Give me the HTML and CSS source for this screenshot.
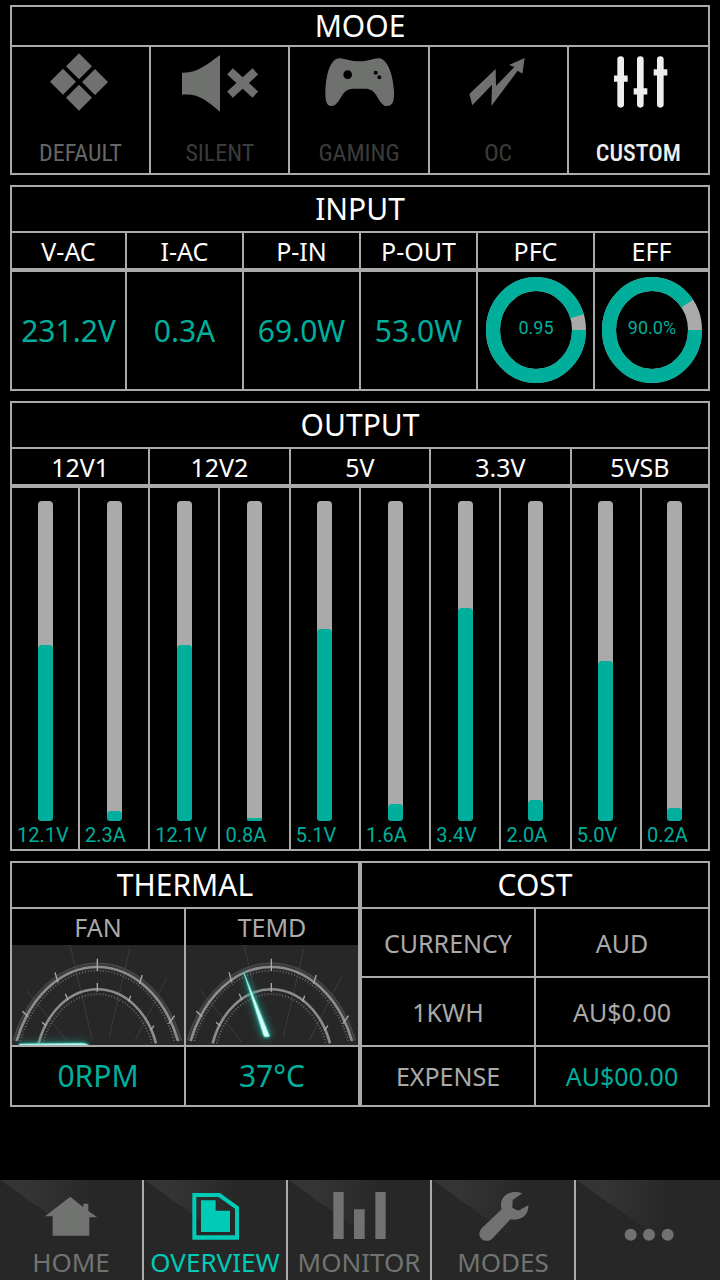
FILE: index.html
```html
<!DOCTYPE html>
<html lang="en">
<head>
    <meta charset="UTF-8">
    <meta name="viewport" content="width=device-width, initial-scale=1.0">
    <title>Overview</title>
    <link rel="stylesheet" href="styles.css">
</head>
<body>
    <main>
        <section class="modes">
            <h2>MOOE</h2>
            <div class="mode-list">
                <button type="button" class="mode mode-default">
                    <svg viewBox="123 153 240 186"><path d="M237 160l39 39-39 39-39-39zM189 206l39 39-39 39-39-39zM285 207l39 39-39 39-39-39zM237 254l39 39-39 39-39-39z"/></svg>
                    <span>DEFAULT</span>
                </button>
                <button type="button" class="mode">
                    <svg viewBox="538 153 240 186"><path d="M544 218C590 220 620 192 658 165V335C620 305 598 280 544 284Z"/><path class="cross" d="M688 214L764 284M764 214L688 284"/></svg>
                    <span>SILENT</span>
                </button>
                <button type="button" class="mode">
                    <svg viewBox="957 153 240 186"><path fill-rule="evenodd" d="M1018 175C1000 174 985 200 979 240C973 285 975 318 993 318C1015 318 1020 290 1035 275Q1045 266 1060 266H1100Q1118 268 1128 284C1140 305 1148 318 1160 318C1180 318 1183 300 1182 275C1180 230 1165 178 1137 175C1120 174 1110 184 1080 184C1050 184 1040 177 1018 175ZM1030 224a13 13 0 1 0 26 0a13 13 0 1 0-26 0ZM1121 218a6 6 0 1 0 12 0a6 6 0 1 0-12 0ZM1132 232a6 6 0 1 0 12 0a6 6 0 1 0-12 0Z"/></svg>
                    <span>GAMING</span>
                </button>
                <button type="button" class="mode">
                    <svg viewBox="295 153 240 186"><path d="M329 282L408 207L409 258L464 201L448 195L495 174L488 221L474 212L395 318L397 254L338 316Z"/></svg>
                    <span>OC</span>
                </button>
                <button type="button" class="mode mode-active">
                    <svg viewBox="714 153 240 186">
                        <path class="rail" d="M782 179V313M841 179V313M901 179V313"/>
                        <path class="knob" d="M762 236H803M821 274H862M881 217H922"/>
                    </svg>
                    <span>CUSTOM</span>
                </button>
            </div>
        </section>

        <table class="input">
            <colgroup><col class="edge"><col span="4"><col class="edge"></colgroup>
            <tr class="title"><th colspan="6">INPUT</th></tr>
            <tr class="names">
                <th>V-AC</th>
                <th>I-AC</th>
                <th>P-IN</th>
                <th>P-OUT</th>
                <th>PFC</th>
                <th>EFF</th>
            </tr>
            <tr class="values">
                <td>231.2V</td>
                <td>0.3A</td>
                <td>69.0W</td>
                <td>53.0W</td>
                <td>
                    <svg class="ring" viewBox="0 0 102 108">
                        <ellipse class="ring-track" cx="52" cy="53" rx="43" ry="46"/>
                        <ellipse class="ring-fill" cx="52" cy="53" rx="43" ry="46" pathLength="100" stroke-dasharray="95 5"/>
                        <text x="52" y="57">0.95</text>
                    </svg>
                </td>
                <td>
                    <svg class="ring" viewBox="0 0 102 108">
                        <ellipse class="ring-track" cx="52" cy="53" rx="43" ry="46"/>
                        <ellipse class="ring-fill" cx="52" cy="53" rx="43" ry="46" pathLength="100" stroke-dasharray="90 10"/>
                        <text x="52" y="57">90.0%</text>
                    </svg>
                </td>
            </tr>
        </table>

        <table class="output">
            <colgroup><col class="edge"><col span="8"><col class="edge"></colgroup>
            <tr class="title"><th colspan="10">OUTPUT</th></tr>
            <tr class="names">
                <th colspan="2">12V1</th>
                <th colspan="2">12V2</th>
                <th colspan="2">5V</th>
                <th colspan="2">3.3V</th>
                <th colspan="2">5VSB</th>
            </tr>
            <tr class="bars">
                <td><div class="bar"><div class="bar-fill" style="height: 55%"></div></div><span>12.1V</span></td>
                <td><div class="bar"><div class="bar-fill" style="height: 3%"></div></div><span>2.3A</span></td>
                <td><div class="bar"><div class="bar-fill" style="height: 55%"></div></div><span>12.1V</span></td>
                <td><div class="bar"><div class="bar-fill" style="height: 1%"></div></div><span>0.8A</span></td>
                <td><div class="bar"><div class="bar-fill" style="height: 60%"></div></div><span>5.1V</span></td>
                <td><div class="bar"><div class="bar-fill" style="height: 5.3%"></div></div><span>1.6A</span></td>
                <td><div class="bar"><div class="bar-fill" style="height: 66.7%"></div></div><span>3.4V</span></td>
                <td><div class="bar"><div class="bar-fill" style="height: 6.7%"></div></div><span>2.0A</span></td>
                <td><div class="bar"><div class="bar-fill" style="height: 50%"></div></div><span>5.0V</span></td>
                <td><div class="bar"><div class="bar-fill" style="height: 4%"></div></div><span>0.2A</span></td>
            </tr>
        </table>

        <div class="bottom">
            <table class="thermal">
                <tr class="title"><th colspan="2">THERMAL</th></tr>
                <tr class="gauge-names">
                    <th>FAN</th>
                    <th>TEMD</th>
                </tr>
                <tr class="gauges">
                    <td>
                        <svg viewBox="0 0 516 300">
                            <defs>
                                <!-- dial shared by both gauges -->
                                <g id="dial">
                                    <path class="ray" d="M174 0L240 282M353 12L292 275M466 96L370 285M44 136L168 292"/>
                                    <path class="halo" d="M8 288A266 358 0 0 1 504 288"/>
                                    <path class="arc" d="M14 288A260 350 0 0 1 498 288"/>
                                    <path class="arc-line" d="M4 286A270 362 0 0 1 508 286"/>
                                    <path class="ticks" d="M25 288A249 337 0 0 1 487 288"/>
                                    <path class="arc" d="M80 295A186 240 0 0 1 432 295"/>
                                    <path class="ticks" d="M92 295A175 227 0 0 1 420 295"/>
                                    <path class="mark" d="M256 41V78M256 114V140M129 82L138 112M391 90L382 116M31 199L49 215M488 212L470 236M160 146L168 166M356 152L350 170M90 232L103 243M426 242L415 256"/>
                                </g>
                            </defs>
                            <use href="#dial"/>
                            <path class="needle" d="M22 297L210 295Q222 296 230 300H22Z"/>
                        </svg>
                    </td>
                    <td>
                        <svg viewBox="0 0 516 300">
                            <use href="#dial"/>
                            <path class="needle" d="M174 84L250 272L249 275H236L233 271Z"/>
                        </svg>
                    </td>
                </tr>
                <tr class="last">
                    <td>0RPM</td>
                    <td>37°C</td>
                </tr>
            </table>

            <table class="cost">
                <tr class="title"><th colspan="2">COST</th></tr>
                <tr>
                    <th>CURRENCY</th>
                    <td>AUD</td>
                </tr>
                <tr>
                    <th>1KWH</th>
                    <td>AU$0.00</td>
                </tr>
                <tr class="last">
                    <th>EXPENSE</th>
                    <td class="total">AU$00.00</td>
                </tr>
            </table>
        </div>
    </main>

    <nav>
        <a href="#home">
            <svg viewBox="123 48 180 174"><path d="M211 80L250 112V101H265V123L292 142H268V197H158V139H135Z"/></svg>
            HOME
        </a>
        <a href="#overview" class="active">
            <svg viewBox="555 48 180 174"><path fill-rule="evenodd" d="M577 69H660L717 110V209H577ZM589 81V196H705V116L655 81ZM603 91H647V122H690V186H603Z"/></svg>
            OVERVIEW
        </a>
        <a href="#monitor">
            <svg viewBox="987 48 180 174"><path d="M1000 66H1031V207H1000ZM1062 118H1094V207H1062ZM1126 66H1157V207H1126Z"/></svg>
            MONITOR
        </a>
        <a href="#modes">
            <svg viewBox="341 48 180 174"><path d="M489 70C455 58 425 75 425 105Q425 112 427 118L367 175C350 196 368 216 388 212Q395 210 400 205L453 148C483 152 508 138 507 106L477 122L459 113L460 90Z"/></svg>
            MODES
        </a>
        <a href="#more" aria-label="More">
            <svg viewBox="774 48 180 174"><circle cx="812" cy="194" r="18"/><circle cx="867" cy="194" r="18"/><circle cx="923" cy="194" r="18"/></svg>
        </a>
    </nav>
</body>
</html>
```

FILE: styles.css
```css
* {
    margin: 0;
    padding: 0;
    box-sizing: border-box;
}

body {
    background: #000;
    color: #fff;
    font-family: 'Noto Sans', sans-serif;
    display: flex;
    flex-direction: column;
    min-height: 100vh;
}

svg {
    display: block;
    fill: currentColor;
}

main {
    display: flex;
    flex-direction: column;
    gap: 10px;
    padding: 5px 10px;
}

/* mode selector */
.modes {
    border: 2px solid #aaa;
}

h2 {
    height: 38px;
    line-height: 38px;
    font-size: 30px;
    font-weight: 400;
    text-align: center;
}

.mode-list {
    display: grid;
    grid-template-columns: repeat(5, 1fr);
    border-top: 2px solid #aaa;
}

.mode {
    display: flex;
    flex-direction: column;
    align-items: center;
    justify-content: space-between;
    height: 126px;
    padding: 4px 0 6px;
    background: #000;
    border: none;
    border-right: 2px solid #aaa;
    color: #6f716f;
    cursor: pointer;
}

.mode:last-child {
    border-right: none;
}

.mode svg {
    width: 80px;
    height: 62px;
}

.mode span {
    color: #3c3c3c;
    font-family: 'Roboto Condensed', Roboto, sans-serif;
    font-size: 24px;
    font-weight: 400;
    line-height: 28px;
}

.mode-default span {
    color: #666;
}

.mode-active,
.mode-active span {
    color: #eee;
}

.mode-active span {
    font-weight: 500;
}

.cross {
    stroke: currentColor;
    stroke-width: 25;
}

.rail {
    stroke: currentColor;
    stroke-width: 20;
    stroke-linecap: round;
}

.knob {
    stroke: currentColor;
    stroke-width: 19;
}

/* tables */
table {
    width: 100%;
    border-collapse: collapse;
    table-layout: fixed;
}

th,
td {
    border: 2px solid #aaa;
    font-size: 25px;
    font-weight: 400;
    line-height: 30px;
    text-align: center;
}

.title {
    height: 46px;
}

.title th {
    font-size: 30px;
}

.names {
    height: 38px;
}

.names th {
    border-bottom-width: 4px;
}

.input .edge {
    width: 115px;
}

.output .edge {
    width: 68px;
}

.values {
    height: 120px;
}

.values td {
    color: #00ae9c;
    font-size: 30px;
}

.ring {
    width: 102px;
    height: 108px;
    margin: 0 auto;
}

.ring ellipse {
    fill: none;
    stroke-width: 14;
}

.ring-track {
    stroke: #aaa;
}

.ring-fill {
    stroke: #00ae9c;
}

.ring text {
    font-family: Roboto, sans-serif;
    font-size: 18px;
    text-anchor: middle;
}

.bars td {
    padding-top: 13px;
}

.bar {
    display: flex;
    align-items: flex-end;
    width: 15px;
    height: 320px;
    margin: 0 auto;
    background: #aaa;
    border-radius: 4px;
}

.bar-fill {
    width: 100%;
    background: #00ae9c;
    border-radius: 4px;
}

.bars span {
    display: block;
    padding-left: 5px;
    color: #00ae9c;
    font-family: Roboto, sans-serif;
    font-size: 20px;
    line-height: 28px;
    text-align: left;
}

/* thermal and cost */
.bottom {
    display: grid;
    grid-template-columns: 1fr 1fr;
}

.gauge-names {
    height: 37px;
}

.gauge-names th {
    border-bottom: none;
    color: #aaa;
}

.gauges {
    height: 101px;
}

.gauges td {
    border-top: none;
}

.gauges svg {
    width: 100%;
    height: 100px;
    background: #272727;
}

.gauges path {
    fill: none;
    stroke: #aaa;
}

.gauges .ray {
    stroke: #3c3c3c;
    stroke-width: 3;
}

.gauges .halo {
    stroke: #555;
    stroke-width: 14;
    opacity: 0.4;
}

.gauges .arc {
    stroke: #8c8c8c;
    stroke-width: 8;
}

.gauges .arc-line {
    stroke: #4a4a4a;
    stroke-width: 3;
}

.gauges .ticks {
    stroke: #666;
    stroke-width: 6;
    stroke-dasharray: 3 6;
}

.gauges .mark {
    stroke: #aaa;
    stroke-width: 4;
}

.gauges .needle {
    fill: #d8fff8;
    stroke: #6fe6d3;
    stroke-width: 2;
    filter: drop-shadow(0 0 5px #2fd6c0) drop-shadow(0 0 12px #1f9d8d);
}

.last {
    height: 60px;
}

.thermal .last td {
    color: #00ae9c;
    font-size: 30px;
}

.cost tr:not(.title):not(.last) {
    height: 69px;
}

.cost tr:not(.title) {
    color: #aaa;
}

.cost .total {
    color: #00ae9c;
}

/* bottom navigation */
nav {
    display: grid;
    grid-template-columns: repeat(5, 1fr);
    margin-top: auto;
}

nav a {
    display: flex;
    flex-direction: column;
    align-items: center;
    height: 100px;
    padding-top: 6px;
    border-right: 2px solid #aaa;
    background: linear-gradient(to top right, #272727 50%, transparent 50%), linear-gradient(100deg, #343434 20%, #272727 60%);
    color: #717371;
    font-size: 26px;
    line-height: 36px;
    text-decoration: none;
}

nav a:last-child {
    border-right: none;
}

nav svg {
    width: 60px;
    height: 58px;
}

nav .active {
    color: #00cbb7;
}
```
